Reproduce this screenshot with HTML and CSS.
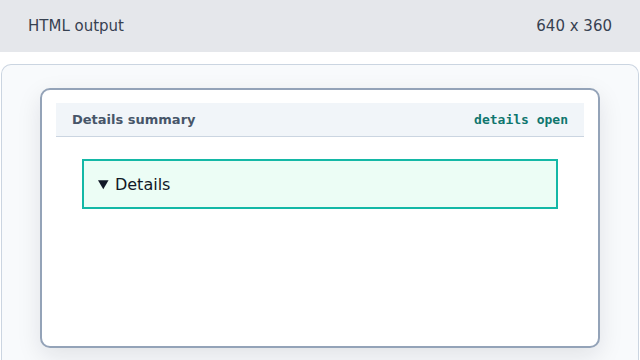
FILE: index.html
```html
<!DOCTYPE html>
<html>
<head>
<meta charset="utf-8">
<link rel="stylesheet" href="styles.css">
</head>
<body>
<header class="topbar">
  <span class="topbar-title">HTML output</span>
  <span class="topbar-size">640 x 360</span>
</header>
<main class="panel">
  <section class="card">
    <div class="card-head">
      <span class="card-title">Details summary</span>
      <code class="card-tag">details open</code>
    </div>
    <div class="card-body">
      <details class="details" open>
        <summary class="summary">Details</summary>
      </details>
    </div>
  </section>
</main>
</body>
</html>
```
FILE: styles.css
```css
html, body {
  margin: 0;
  padding: 0;
  background: #ffffff;
  overflow: hidden;
  width: 640px;
  height: 360px;
}
body {
  font-family: "DejaVu Sans", sans-serif;
  display: flex;
  flex-direction: column;
}
.topbar {
  height: 52px;
  flex: none;
  background: #e5e7eb;
  display: flex;
  align-items: center;
  justify-content: space-between;
  padding: 0 28px;
  font-size: 15px;
  color: #374151;
}
.panel {
  flex: 1;
  margin: 12px 1px 0;
  border: 1px solid #cbd5e1;
  border-bottom: 0;
  border-radius: 10px 10px 0 0;
  background: #f8fafc;
  padding: 23px 38px 0;
}
.card {
  height: 260px;
  box-sizing: border-box;
  border: 2px solid #94a3b8;
  border-radius: 10px;
  background: #ffffff;
  padding: 13px 14px;
  box-shadow: 0 8px 24px rgba(15, 23, 42, 0.10);
}
.card-head {
  height: 33px;
  background: #f1f5f9;
  border-bottom: 1px solid #cbd5e1;
  display: flex;
  align-items: center;
  justify-content: space-between;
  padding: 0 16px;
}
.card-title {
  font-size: 13px;
  font-weight: bold;
  color: #475569;
}
.card-tag {
  font-family: "DejaVu Sans Mono", monospace;
  font-size: 13px;
  font-weight: bold;
  color: #0f766e;
}
.card-body {
  padding: 22px 26px 0;
}
.details {
  border: 2px solid #14b8a6;
  background: #ecfdf5;
  height: 50px;
  box-sizing: border-box;
}
.summary {
  padding: 0 14px;
  line-height: 47px;
  font-size: 16px;
  color: #111827;
  cursor: pointer;
}
```
